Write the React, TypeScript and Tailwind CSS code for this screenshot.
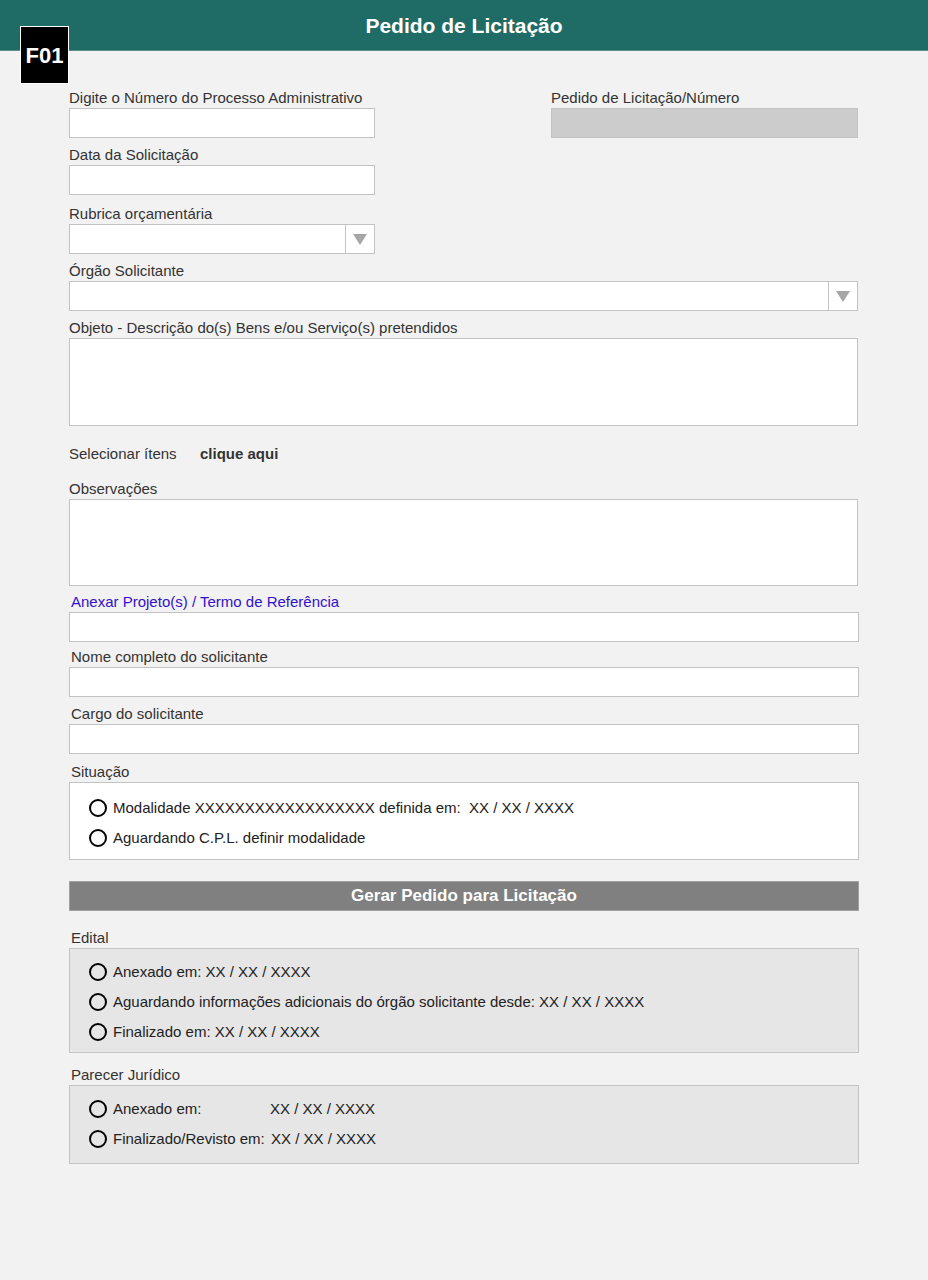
import React from "react";

const font = { fontFamily: '"Liberation Sans", Arial, sans-serif' };

function Label({ children, className = "" }: { children: React.ReactNode; className?: string }) {
  return (
    <div className={`h-[18px] leading-[18px] text-[15px] text-[#333333] mb-px ${className}`}>{children}</div>
  );
}

function Input({ gray = false, className = "" }: { gray?: boolean; className?: string }) {
  return (
    <div
      className={`h-[30px] border border-[#c3c3c3] ${gray ? "bg-[#cccccc]" : "bg-white"} ${className}`}
    />
  );
}

function Select({ className = "" }: { className?: string }) {
  return (
    <div className={`h-[30px] border border-[#c3c3c3] bg-white flex justify-end ${className}`}>
      <div className="w-[29px] border-l border-[#c3c3c3] flex items-center justify-center">
        <svg width="16" height="14" viewBox="0 0 16 14">
          <polygon points="1,2 15,2 8,13" fill="#a6a6a6" />
        </svg>
      </div>
    </div>
  );
}

function Radio({ children }: { children: React.ReactNode }) {
  return (
    <div className="h-[30px] flex items-center gap-[6px] text-[15px] text-[#222222]">
      <span className="w-[18px] h-[18px] rounded-full border-2 border-black bg-transparent shrink-0" />
      <span className="whitespace-pre">{children}</span>
    </div>
  );
}

export default function App() {
  return (
    <div style={font} className="relative min-h-[1280px] w-[928px] bg-[#f2f2f2]">
      {/* cabeçalho */}
      <div className="h-[51px] bg-[#1f6b66] border-b border-[#5a918d] flex items-center justify-center">
        <h1 className="text-white font-bold text-[21px] mt-[2px]">Pedido de Licitação</h1>
      </div>
      <div className="absolute left-[20px] top-[26px] w-[49px] h-[58px] bg-black border border-white flex items-center justify-center">
        <span className="text-white font-bold text-[22px] mt-[1px]">F01</span>
      </div>

      <div className="pl-[69px] w-[858px]">
        {/* linha 1 */}
        <div className="mt-[38px] flex justify-between">
          <div className="w-[306px]">
            <Label>Digite o Número do Processo Administrativo</Label>
            <Input />
          </div>
          <div className="w-[307px]">
            <Label>Pedido de Licitação/Número</Label>
            <Input gray />
          </div>
        </div>

        <div className="mt-[8px] w-[306px]">
          <Label>Data da Solicitação</Label>
          <Input />
        </div>

        <div className="mt-[10px] w-[306px]">
          <Label>Rubrica orçamentária</Label>
          <Select />
        </div>

        <div className="mt-[8px]">
          <Label>Órgão Solicitante</Label>
          <Select />
        </div>

        <div className="mt-[8px]">
          <Label>Objeto - Descrição do(s) Bens e/ou Serviço(s) pretendidos</Label>
          <div className="h-[88px] border border-[#c3c3c3] bg-white" />
        </div>

        <div className="mt-[19px] h-[18px] leading-[18px] text-[15px] text-[#333333] flex">
          <span className="w-[131px]">Selecionar ítens</span>
          <span className="font-bold">clique aqui</span>
        </div>

        <div className="mt-[17px]">
          <Label>Observações</Label>
          <div className="h-[87px] border border-[#c3c3c3] bg-white" />
        </div>

        <div className="mt-[7px]">
          <Label className="pl-[2px] !text-[#3311cc]">Anexar Projeto(s) / Termo de Referência</Label>
          <Input className="w-[790px]" />
        </div>

        <div className="mt-[6px]">
          <Label className="pl-[2px]">Nome completo do solicitante</Label>
          <Input className="w-[790px]" />
        </div>

        <div className="mt-[8px]">
          <Label className="pl-[2px]">Cargo do solicitante</Label>
          <Input className="w-[790px]" />
        </div>

        <div className="mt-[9px]">
          <Label className="pl-[2px]">Situação</Label>
          <div className="w-[790px] h-[78px] border border-[#c3c3c3] bg-white pt-[10px] pl-[19px]">
            <Radio>Modalidade XXXXXXXXXXXXXXXXXX definida em:  XX / XX / XXXX</Radio>
            <Radio>Aguardando C.P.L. definir modalidade</Radio>
          </div>
        </div>

        <button className="mt-[21px] w-[790px] h-[30px] bg-[#808080] border border-[#a0a0a0] text-white font-bold text-[17px] flex items-center justify-center">
          Gerar Pedido para Licitação
        </button>

        <div className="mt-[18px]">
          <Label className="pl-[2px]">Edital</Label>
          <div className="w-[790px] h-[105px] border border-[#c3c3c3] bg-[#e6e6e6] pt-[8px] pl-[19px]">
            <Radio>Anexado em: XX / XX / XXXX</Radio>
            <Radio>Aguardando informações adicionais do órgão solicitante desde: XX / XX / XXXX</Radio>
            <Radio>Finalizado em: XX / XX / XXXX</Radio>
          </div>
        </div>

        <div className="mt-[13px]">
          <Label className="pl-[2px]">Parecer Jurídico</Label>
          <div className="w-[790px] h-[79px] border border-[#c3c3c3] bg-[#e6e6e6] pt-[8px] pl-[19px]">
            <Radio>
              <span className="inline-block w-[157px]">Anexado em:</span>XX / XX / XXXX
            </Radio>
            <Radio>
              <span className="inline-block w-[158px]">Finalizado/Revisto em:</span>XX / XX / XXXX
            </Radio>
          </div>
        </div>
      </div>
    </div>
  );
}
